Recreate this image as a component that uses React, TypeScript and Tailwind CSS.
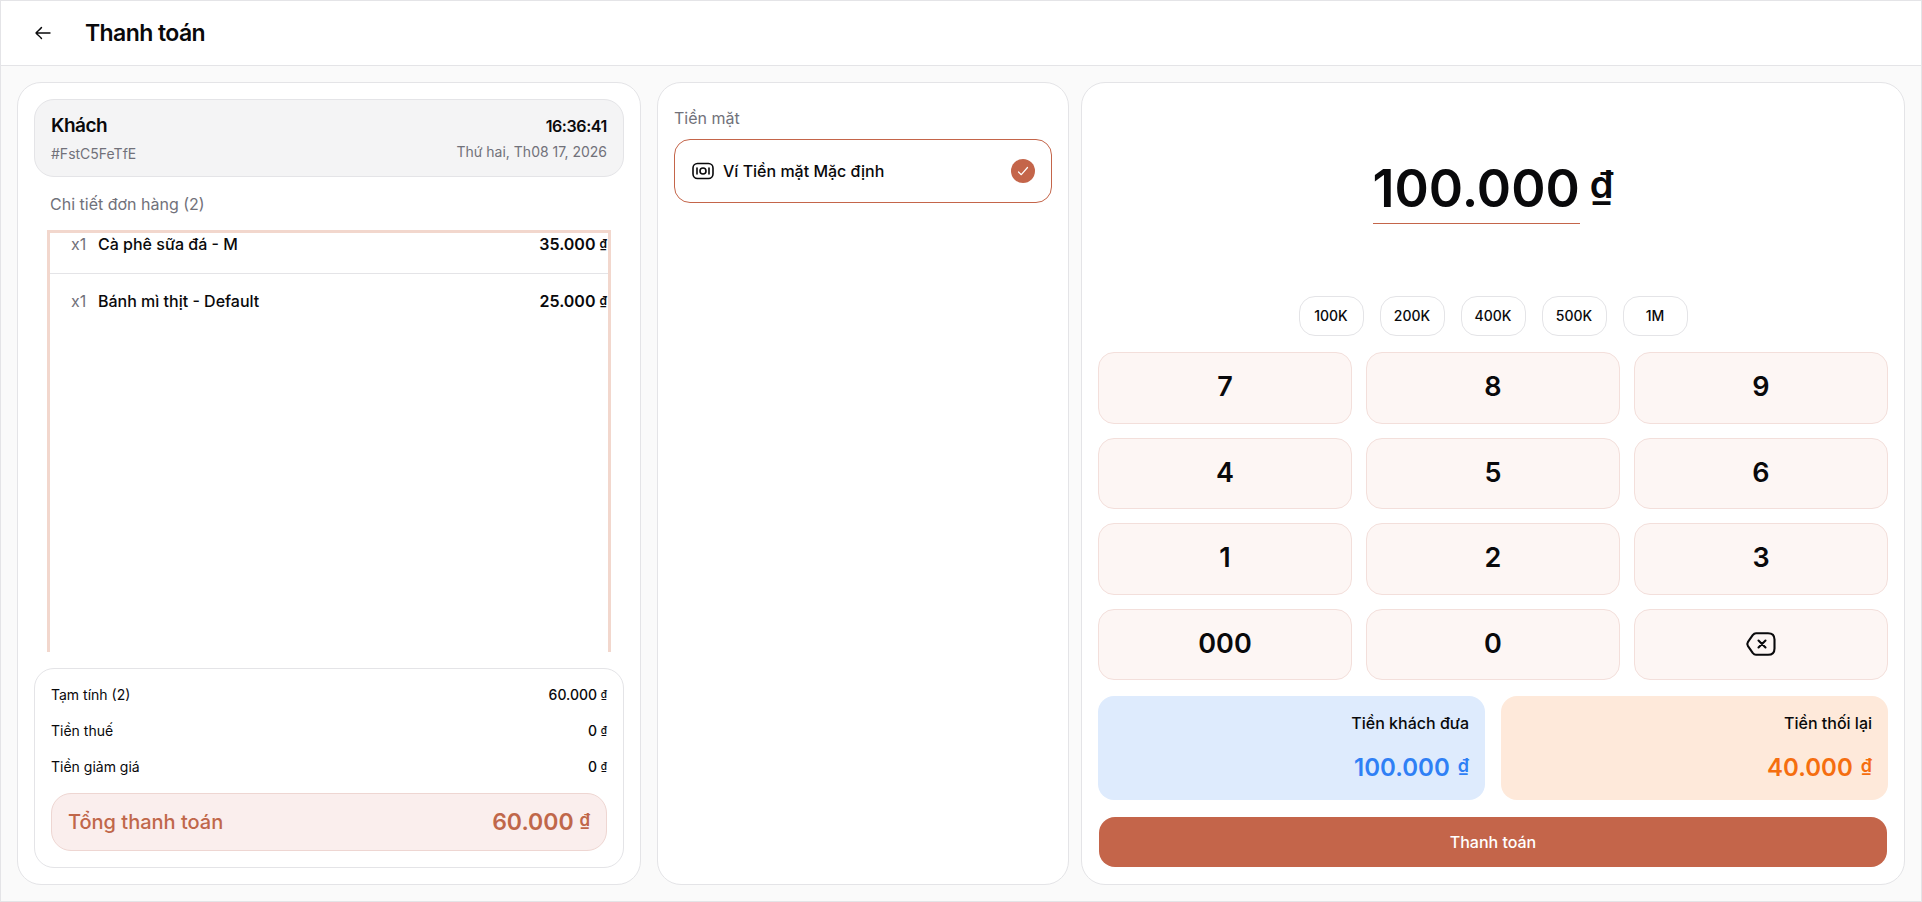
import { useState } from "react";

const items = [
  { qty: 1, name: "Cà phê sữa đá - M", price: "35.000" },
  { qty: 1, name: "Bánh mì thịt - Default", price: "25.000" },
];
const summary = [
  { label: "Tạm tính (2)", value: "60.000" },
  { label: "Tiền thuế", value: "0" },
  { label: "Tiền giảm giá", value: "0" },
];
const presets = [
  { label: "100K", value: 100000 },
  { label: "200K", value: 200000 },
  { label: "400K", value: 400000 },
  { label: "500K", value: 500000 },
  { label: "1M", value: 1000000 },
];
const keys = ["7", "8", "9", "4", "5", "6", "1", "2", "3", "000", "0"];
const total = 60000;

const format = (n: number) => String(n).replace(/\B(?=(\d{3})+(?!\d))/g, ".");

function ArrowLeft() {
  return (
    <svg width="24" height="24" viewBox="0 0 24 24" fill="none" stroke="currentColor" strokeWidth="1.4" strokeLinecap="round" strokeLinejoin="round" aria-hidden="true">
      <path d="M5 12H19M10.500 6.500C9 8.500 6.500 10.300 5 12C6.500 13.700 9 15.500 10.500 17.500" />
    </svg>
  );
}

function Banknote() {
  return (
    <svg width="24" height="24" viewBox="0 0 24 24" fill="none" stroke="currentColor" strokeWidth="1.6" strokeLinecap="round" aria-hidden="true">
      <rect x="2" y="4.500" width="20" height="15" rx="4.500" />
      <circle cx="12" cy="12" r="3" />
      <path d="M6 9V15M18 9V15" />
    </svg>
  );
}

function Backspace() {
  return (
    <svg width="32" height="32" viewBox="0 0 32 32" fill="none" stroke="currentColor" strokeWidth="2.1" strokeLinecap="round" strokeLinejoin="round" aria-hidden="true">
      <path d="M11 5.200H23C27.500 5.200 29.500 7 29.500 11.500V20.500C29.500 25 27.500 26.800 23 26.800H11C9.500 26.800 8.600 26 7.700 24.800L3 18.200C2 16.700 2 15.300 3 13.800L7.700 7.200C8.600 6 9.500 5.200 11 5.200Z" />
      <path d="M13.500 12.500L20.500 19.500M20.500 12.500L13.500 19.500" />
    </svg>
  );
}

export default function App() {
  const [given, setGiven] = useState(100000);

  const press = (key: string) => setGiven((v) => Math.min(Number(String(v) + key), 999999999));

  return (
    <div className="flex min-h-screen flex-col border border-[#e4e4e7] bg-[#fafafa] font-['Inter','Noto_Sans',sans-serif] text-[#09090b]">
      <header className="flex h-[65px] items-center gap-[30px] border-b border-[#e4e4e7] bg-white px-[30px]">
        <button type="button" aria-label="Quay lại">
          <ArrowLeft />
        </button>
        <h1 className="text-[23px] font-semibold tracking-tight">Thanh toán</h1>
      </header>

      <main className="grid flex-1 grid-cols-[1fr_2fr] gap-4 p-4">
        <section className="flex flex-col rounded-3xl border border-[#e4e4e7] bg-white p-4">
          <div className="flex items-start justify-between rounded-[20px] border border-[#e4e4e7] bg-[#f4f4f5] px-4 pt-3 pb-2">
            <div>
              <p className="text-[19px] leading-7 font-semibold tracking-tight">Khách</p>
              <p className="text-sm leading-7 text-[#71717a]">#FstC5FeTfE</p>
            </div>
            <div className="text-right">
              <p className="text-base leading-7 font-semibold tracking-tight">16:36:41</p>
              <p className="text-sm leading-6 text-[#71717a]">Thứ hai, Th08 17, 2026</p>
            </div>
          </div>
          <h2 className="px-4 pt-[15px] pb-[14px] text-base text-[#71717a]">Chi tiết đơn hàng (2)</h2>
          <ul className="mx-[13px] flex-1 border-x-[3px] border-t-[3px] border-[#f2d7cd]">
            {items.map((item, i) => (
              <li
                key={item.name}
                className={
                  i === 0
                    ? "flex h-[41px] items-start border-b border-[#e4e4e7] pr-px pl-[21px] text-base leading-[22px]"
                    : "flex h-[53px] items-center pr-px pl-[21px] text-base leading-[22px]"
                }
              >
                <span className="w-[27px] text-[#71717a]">x{item.qty}</span>
                <span className="font-medium">{item.name}</span>
                <span className="ml-auto font-semibold">
                  {item.price} <span className="align-[2px] text-xs">₫</span>
                </span>
              </li>
            ))}
          </ul>
          <div className="mt-4 rounded-[20px] border border-[#e4e4e7] p-4 pt-2">
            {summary.map((row) => (
              <div key={row.label} className="flex h-9 items-center justify-between text-sm">
                <span>{row.label}</span>
                <span className="font-medium">
                  {row.value} <span className="align-[2px] text-[10px]">₫</span>
                </span>
              </div>
            ))}
            <div className="mt-2 flex h-[58px] items-center justify-between rounded-[20px] border border-[#eed6d2] bg-[#faeeed] px-4 text-[#c0674a]">
              <span className="text-xl font-medium">Tổng thanh toán</span>
              <span className="text-[23px] font-semibold">
                60.000 <span className="align-[4px] text-[17px]">₫</span>
              </span>
            </div>
          </div>
        </section>

        <div className="grid grid-cols-[1fr_2fr] gap-3">
          <section className="rounded-3xl border border-[#e4e4e7] bg-white px-4 pt-[23px]">
            <h2 className="text-base text-[#71717a]">Tiền mặt</h2>
            <button type="button" className="mt-[9px] flex h-16 w-full items-center gap-2 rounded-2xl border border-[#c4654a] px-4 text-base font-medium">
              <Banknote />
              Ví Tiền mặt Mặc định
              <span className="ml-auto flex size-6 items-center justify-center rounded-full bg-[#c4654a] text-white">
                <svg width="12" height="12" viewBox="0 0 12 12" fill="none" stroke="currentColor" strokeWidth="1.2" strokeLinecap="round" strokeLinejoin="round" aria-hidden="true">
                  <path d="M1.500 7L4.300 9.700L10.500 2.500" />
                </svg>
              </span>
            </button>
          </section>

          <section className="flex flex-col rounded-3xl border border-[#e4e4e7] bg-white p-4 pb-[17px]">
            <div className="flex flex-1 items-center justify-center gap-[10px] pb-4 font-semibold">
              <output className="border-b border-[#c4654a] text-[52px] leading-[68px]">{format(given)}</output>
              <span className="pb-3 text-[38px] leading-[48px]">₫</span>
            </div>
            <div className="flex justify-center gap-4">
              {presets.map((p) => (
                <button key={p.label} type="button" onClick={() => setGiven(p.value)} className="h-10 w-[65px] rounded-2xl border border-[#e4e4e7] text-sm font-medium">
                  {p.label}
                </button>
              ))}
            </div>
            <div className="mt-4 grid h-[328px] grid-cols-3 grid-rows-4 gap-[14px]">
              {keys.map((k) => (
                <button key={k} type="button" onClick={() => press(k)} className="rounded-2xl border border-[#f3dfdb] bg-[#fdf6f4] pb-px text-[27px] font-semibold">
                  {k}
                </button>
              ))}
              <button
                type="button"
                aria-label="Xóa"
                onClick={() => setGiven((v) => Math.floor(v / 10))}
                className="flex items-center justify-center rounded-2xl border border-[#f3dfdb] bg-[#fdf6f4]"
              >
                <Backspace />
              </button>
            </div>
            <div className="mt-4 grid grid-cols-2 gap-4 text-right">
              <div className="h-[104px] rounded-2xl bg-[#deebfd] px-4 pt-[15px]">
                <p className="text-base font-medium">Tiền khách đưa</p>
                <p className="mt-[17px] text-2xl leading-8 font-semibold text-[#2f80f5]">
                  {format(given)} <span className="ml-[2px] align-[4px] text-lg leading-none">₫</span>
                </p>
              </div>
              <div className="h-[104px] rounded-2xl bg-[#fee9da] px-4 pt-[15px]">
                <p className="text-base font-medium">Tiền thối lại</p>
                <p className="mt-[17px] text-2xl leading-8 font-semibold text-[#f56e0f]">
                  {format(Math.max(given - total, 0))} <span className="ml-[2px] align-[4px] text-lg leading-none">₫</span>
                </p>
              </div>
            </div>
            <button type="button" className="mx-px mt-[17px] h-[50px] rounded-2xl bg-[#c4654a] pb-px text-base font-medium text-white">
              Thanh toán
            </button>
          </section>
        </div>
      </main>
    </div>
  );
}
